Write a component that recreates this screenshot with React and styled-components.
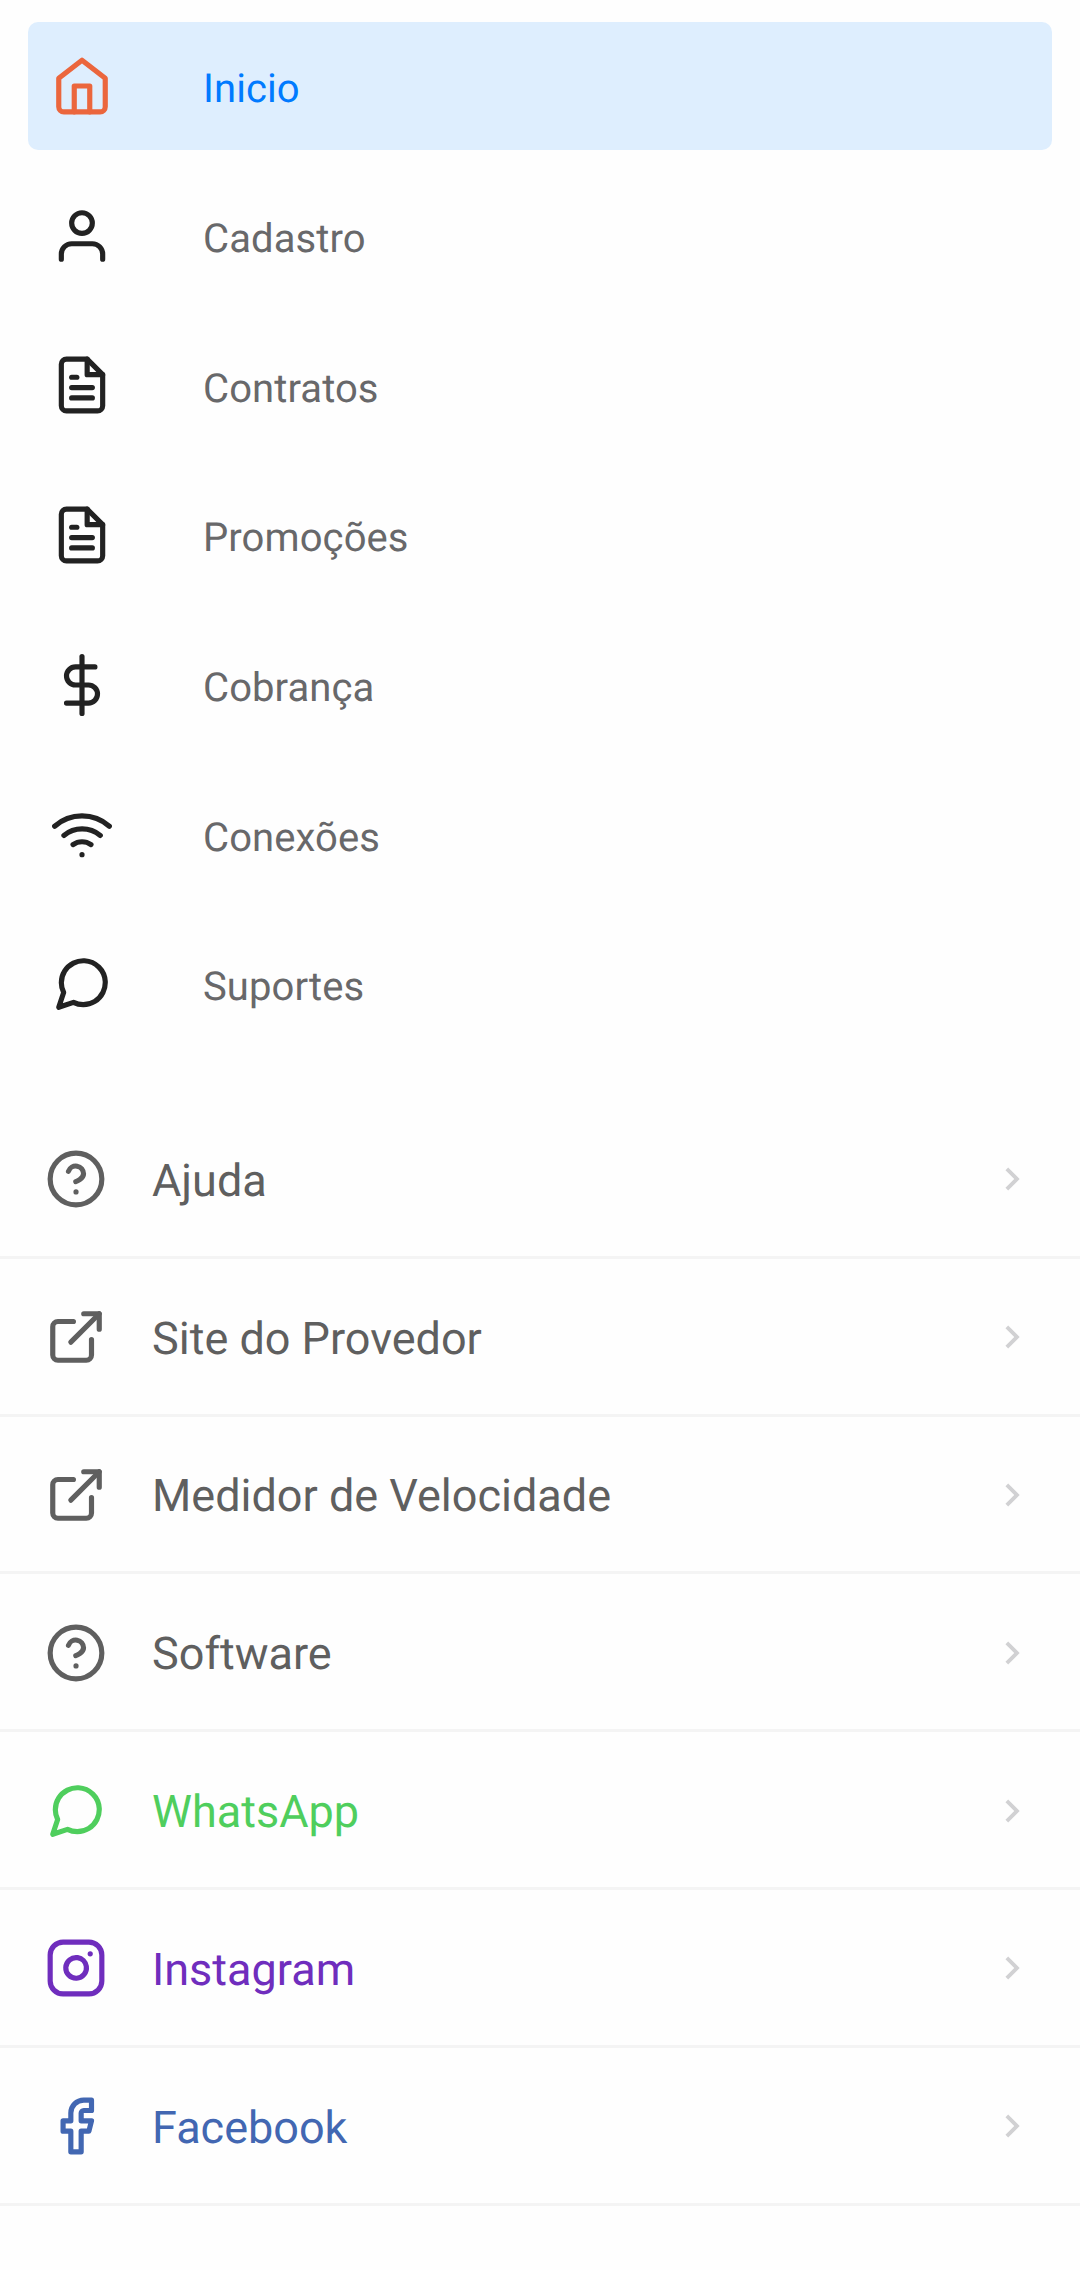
import React from 'react';
import styled, { createGlobalStyle } from 'styled-components';
import {
  FiHome,
  FiUser,
  FiFileText,
  FiDollarSign,
  FiWifi,
  FiMessageCircle,
  FiHelpCircle,
  FiExternalLink,
  FiInstagram,
  FiFacebook,
} from 'react-icons/fi';
import { MdChevronRight } from 'react-icons/md';

const GlobalStyle = createGlobalStyle`
  body {
    margin: 0;
    background: #fefefe;
    font-family: Roboto, sans-serif;
    text-rendering: geometricPrecision;
  }
`;

const Drawer = styled.div`
  box-sizing: border-box;
  min-height: 2270px;
  padding-top: 22px;
`;

const Menu = styled.nav`
  display: flex;
  flex-direction: column;
  gap: 22px;
  padding: 0 28px;
`;

const MenuItem = styled.a`
  display: flex;
  align-items: center;
  gap: 90px;
  height: 127.7px;
  padding-left: 23px;
  border-radius: 10px;
  background: ${({ $ativo }) => ($ativo ? '#deeefe' : 'transparent')};
  color: ${({ $ativo }) => ($ativo ? '#007aff' : '#68686a')};
  cursor: pointer;

  svg {
    flex: none;
    color: ${({ $ativo }) => ($ativo ? '#eb663d' : '#222222')};
  }
`;

const MenuLabel = styled.span`
  font-size: 40px;
  line-height: 48px;
  letter-spacing: 0.1px;
  padding-top: 7px;
`;

const Links = styled.div`
  margin-top: 53.2px;
`;

const LinkItem = styled.a`
  box-sizing: border-box;
  display: flex;
  align-items: center;
  height: 157.8px;
  padding: 2px 45px 0 45px;
  border-bottom: 3px solid #f4f4f4;
  color: ${({ $cor }) => $cor || '#5f5f5f'};
  cursor: pointer;

  svg {
    flex: none;
  }
`;

const LinkLabel = styled.span`
  flex: 1;
  margin-left: 45px;
  padding-top: 3px;
  font-size: 45px;
  line-height: 54px;
`;

const Seta = styled(MdChevronRight)`
  color: #d1d1d3;
`;

const menu = [
  { label: 'Inicio', Icon: FiHome },
  { label: 'Cadastro', Icon: FiUser },
  { label: 'Contratos', Icon: FiFileText },
  { label: 'Promoções', Icon: FiFileText },
  { label: 'Cobrança', Icon: FiDollarSign },
  { label: 'Conexões', Icon: FiWifi },
  { label: 'Suportes', Icon: FiMessageCircle },
];

const links = [
  { label: 'Ajuda', Icon: FiHelpCircle },
  { label: 'Site do Provedor', Icon: FiExternalLink },
  { label: 'Medidor de Velocidade', Icon: FiExternalLink },
  { label: 'Software', Icon: FiHelpCircle },
  { label: 'WhatsApp', Icon: FiMessageCircle, cor: '#4fce5d' },
  { label: 'Instagram', Icon: FiInstagram, cor: '#6f2dbd' },
  { label: 'Facebook', Icon: FiFacebook, cor: '#4267b2' },
];

const App = () => {
  const [ativo, setAtivo] = React.useState('Inicio');

  return (
    <Drawer>
      <GlobalStyle />
      <Menu>
        {menu.map(({ label, Icon }) => (
          <MenuItem
            key={label}
            $ativo={ativo === label}
            onClick={() => setAtivo(label)}
          >
            <Icon size={62} />
            <MenuLabel>{label}</MenuLabel>
          </MenuItem>
        ))}
      </Menu>

      <Links>
        {links.map(({ label, Icon, cor }) => (
          <LinkItem key={label} $cor={cor}>
            <Icon size={62} />
            <LinkLabel>{label}</LinkLabel>
            <Seta size={46} />
          </LinkItem>
        ))}
      </Links>
    </Drawer>
  );
};

export default App;
